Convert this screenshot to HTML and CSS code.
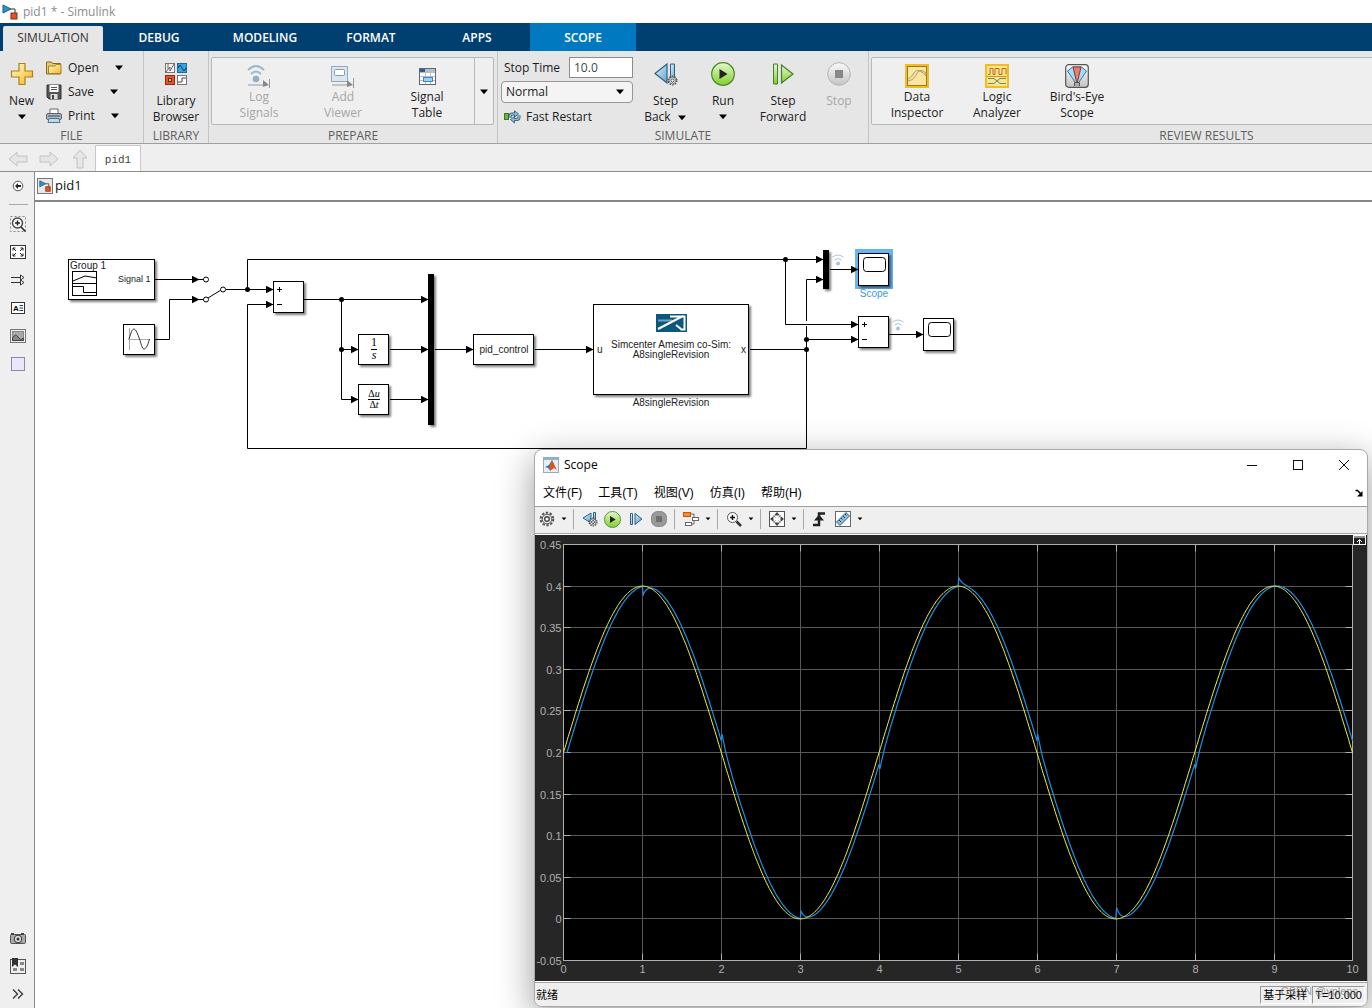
FILE: index.html
```html
<!DOCTYPE html>
<html lang="en">
<head>
<meta charset="utf-8">
<title>pid1 * - Simulink</title>
<link rel="stylesheet" href="styles.css">
</head>
<body>
<svg class="defs" aria-hidden="true">
  <defs>
    <linearGradient id="gold" x1="0" y1="0" x2="1" y2="1"><stop offset="0" stop-color="#fffbd0"/><stop offset="1" stop-color="#f3b51a"/></linearGradient>
    <linearGradient id="blue" x1="0" y1="0" x2="1" y2="1"><stop offset="0" stop-color="#e4f3fc"/><stop offset="1" stop-color="#5fa3cf"/></linearGradient>
    <linearGradient id="green" x1="0" y1="0" x2="0" y2="1"><stop offset="0" stop-color="#e4f8ce"/><stop offset="1" stop-color="#7fd02c"/></linearGradient>
    <linearGradient id="grey" x1="0" y1="0" x2="0" y2="1"><stop offset="0" stop-color="#fafafa"/><stop offset="1" stop-color="#c4c4c4"/></linearGradient>
    <symbol id="caret" viewBox="0 0 10 6"><path d="M1 0.5H9L5 5.2z" fill="#000"/></symbol>
    <symbol id="model" viewBox="0 0 16 16"><path d="M1 1l8 4-8 4z" fill="#2a93cf" stroke="#1b5d87"/><path d="M9 5h4v4" fill="none" stroke="#333"/><rect x="9" y="9" width="6" height="6" fill="#dd5526" stroke="#8d2b0d"/></symbol>
    <symbol id="gear" viewBox="0 0 16 16"><circle cx="8" cy="8" r="6.3" fill="none" stroke="#555" stroke-width="2" stroke-dasharray="2.4 1.55"/><circle cx="8" cy="8" r="4.8" fill="#eee" stroke="#555"/><circle cx="8" cy="8" r="2.3" fill="#fff" stroke="#444" stroke-width="1.4"/></symbol>
    <symbol id="run" viewBox="0 0 24 24"><circle cx="12" cy="12" r="11.300" fill="url(#green)" stroke="#4d8521" stroke-width="1.2"/><path d="M8.500 7l8 5-8 5z" fill="#222"/></symbol>
    <symbol id="back" viewBox="0 0 24 24"><path d="M13 2v19L1 11.5z" fill="url(#blue)" stroke="#2f6185" stroke-width="1.2"/><path d="M16.500 2h4v18h-4z" fill="url(#blue)" stroke="#2f6185"/><use href="#gear" x="13" y="13" width="11" height="11"/></symbol>
    <symbol id="wifi" viewBox="0 0 12 12"><g fill="none" stroke="#a9c3d8"><path d="M0.500 3Q6-1 11.500 3M2.500 6Q6 3 9.500 6"/></g><circle cx="6" cy="9.500" r="2" fill="#a9c3d8"/></symbol>
    <symbol id="arrow" viewBox="0 0 20 16"><path d="M1 8l8-7v4h10v6H9v4z" fill="#e6e6e6" stroke="#c2c2c2"/></symbol>
    <filter id="drop" x="-20%" y="-20%" width="150%" height="150%"><feDropShadow dx="2" dy="2" stdDeviation="1.300" flood-opacity="0.5"/></filter>
  </defs>
</svg>

<header class="titlebar">
  <svg width="16" height="16"><use href="#model"/></svg>
  <h1 class="titlebar-text">pid1 * - Simulink</h1>
</header>

<nav class="tabs">
  <button class="tab tab-active">SIMULATION</button>
  <button class="tab">DEBUG</button>
  <button class="tab">MODELING</button>
  <button class="tab">FORMAT</button>
  <button class="tab">APPS</button>
  <button class="tab tab-context">SCOPE</button>
</nav>

<div class="ribbon">
  <section class="group group-file">
    <div class="group-body">
      <button class="tool tool-new">
        <svg class="tool-icon" viewBox="0 0 24 24"><path d="M9 1.500h6V9h7.500v6H15v7.500H9V15H1.500V9H9z" fill="url(#gold)" stroke="#a9821c" stroke-width="1.200"/></svg>
        <span>New</span>
        <svg class="caret tool-caret"><use href="#caret"/></svg>
      </button>
      <div class="file-list">
        <button class="row-tool"><svg width="16" height="16" viewBox="0 0 16 16"><path d="M0.500 2h5l1 1.500h8V14h-14z" fill="#e8cb72" stroke="#876817"/><path d="M2.500 13.500V6H9l1-1.500h5v9z" fill="url(#gold)" stroke="#a5822a"/></svg>Open<svg class="caret"><use href="#caret"/></svg></button>
        <button class="row-tool"><svg width="16" height="16" viewBox="0 0 16 16"><path d="M1 1h14v14H3l-2-2z" fill="#555" stroke="#333"/><path d="M3.500 1h9v7h-9z" fill="#fff"/><path d="M5 3.500h6M5 5.500h6" stroke="#555"/><path d="M4.500 10h7v5h-7z" fill="#ddd"/><path d="M6 11h2v4H6z" fill="#444"/></svg>Save<svg class="caret"><use href="#caret"/></svg></button>
        <button class="row-tool"><svg width="16" height="16" viewBox="0 0 16 16"><path d="M4 1h8v6H4z" fill="#fff" stroke="#666"/><rect x="0.500" y="5.500" width="15" height="6" rx="1.500" fill="#aebac6" stroke="#58626c"/><path d="M2 8h12" stroke="#445"/><path d="M3 10.500h10l1 4H2z" fill="#b9dcf5" stroke="#54728a"/></svg>Print<svg class="caret"><use href="#caret"/></svg></button>
      </div>
    </div>
    <h2 class="group-name">FILE</h2>
  </section>

  <section class="group group-library">
    <div class="group-body">
      <button class="tool tool-library">
        <svg class="tool-icon" viewBox="0 0 24 24"><rect x="1.500" y="1.500" width="9" height="9" fill="#f4f4f4" stroke="#777"/><path d="M2 10l4-5v4l4-7M4 2v5" fill="none" stroke="#666"/><rect x="13.500" y="1.500" width="9" height="9" fill="#35a3dc" stroke="#1b6c9b"/><path d="M14 6q2-5 4 0t4 0" fill="none" stroke="#083c5c"/><rect x="1.500" y="13.500" width="9" height="9" fill="#e2572a" stroke="#902d0d"/><rect x="4.500" y="16.500" width="3" height="3" fill="#f7b193" stroke="#732206"/><rect x="13.500" y="13.500" width="9" height="9" fill="#fff" stroke="#777"/><path d="M14 20h4v-4h4" fill="none" stroke="#444"/></svg>
        <span>Library<br>Browser</span>
      </button>
    </div>
    <h2 class="group-name">LIBRARY</h2>
  </section>

  <section class="group group-prepare">
    <div class="gallery">
      <button class="tool tool-prepare" disabled>
        <svg class="tool-icon" viewBox="0 0 24 24"><g fill="none" stroke="#9db6c9" stroke-width="1.800"><path d="M1 6q8-8 16 0M4 10q5-5 10 0"/></g><circle cx="9" cy="15" r="3.300" fill="#8fb0c9"/><path d="M1 21h16M22.500 15v9" stroke="#999"/><path d="M16 16l6 5-6 2z" fill="#888"/></svg>
        <span>Log<br>Signals</span>
      </button>
      <button class="tool tool-prepare" disabled>
        <svg class="tool-icon" viewBox="0 0 24 24"><rect x="0.500" y="2.500" width="16" height="15" fill="#dbe7f0" stroke="#91a9bb"/><rect x="3.500" y="5.500" width="10" height="6" rx="1" fill="#fff" stroke="#7f9db5"/><path d="M1 21h16M22.500 14v10" stroke="#999"/><path d="M16 16l6 5-6 2z" fill="#888"/></svg>
        <span>Add<br>Viewer</span>
      </button>
      <button class="tool tool-prepare">
        <svg class="tool-icon" viewBox="0 0 24 24"><rect x="4.500" y="4.500" width="16" height="16" fill="#fff" stroke="#666"/><path d="M5 5h15v3H5z" fill="#a9c2d6"/><path d="M5 5h5v3H5z" fill="#2f5f8a"/><path d="M5 8.500h15M5 12.500h15M5 16.500h15M10.500 8v12M15.500 8v12" stroke="#bbb"/><rect x="8.500" y="13.500" width="9" height="4" fill="#9bd3ff" stroke="#3a87c8"/></svg>
        <span>Signal<br>Table</span>
      </button>
      <button class="gallery-more" aria-label="More"><svg class="caret"><use href="#caret"/></svg></button>
    </div>
    <h2 class="group-name">PREPARE</h2>
  </section>

  <section class="group group-simulate">
    <div class="group-body">
      <div class="sim-form">
        <div class="sim-time"><label for="stop-time">Stop Time</label><input id="stop-time" class="time-input" type="text" value="10.0"></div>
        <div class="mode">
          <select class="mode-select" aria-label="Simulation mode"><option>Normal</option></select>
          <svg class="caret mode-caret"><use href="#caret"/></svg>
        </div>
        <button class="row-tool row-restart"><svg width="17" height="14" viewBox="0 0 17 14"><rect x="0.500" y="3.500" width="4" height="6" fill="#6fb33c" stroke="#3f7420"/><g fill="none" stroke="#27506f" stroke-width="3"><path d="M6 8V6.500q0-2.500 2.500-2.500H11M15 5.500V7q0 2.500-2.500 2.500H10"/></g><g fill="#8dbbdc" stroke="#27506f" stroke-width="0.800"><path d="M10.500 0.800L14.500 4l-4 3zM10.500 6.500l-4 3 4 3.500z"/></g><path d="M6 8V6.500Q6 4 8.500 4H11M15 5.500V7q0 2.500-2.500 2.500H10" fill="none" stroke="#8dbbdc" stroke-width="1.500"/></svg>Fast Restart</button>
      </div>
      <button class="tool tool-back">
        <svg class="tool-icon" viewBox="0 0 24 24"><use href="#back"/></svg>
        <span>Step<br>Back&nbsp; <svg class="caret"><use href="#caret"/></svg></span>
      </button>
      <button class="tool tool-run">
        <svg class="tool-icon" viewBox="0 0 24 24"><use href="#run"/></svg>
        <span>Run</span>
        <svg class="caret tool-caret"><use href="#caret"/></svg>
      </button>
      <button class="tool tool-forward">
        <svg class="tool-icon" viewBox="0 0 24 24"><path d="M2.500 2h4v20h-4z" fill="url(#green)" stroke="#467f29"/><path d="M10.500 3v18L22 12z" fill="url(#green)" stroke="#467f29" stroke-width="1.200"/></svg>
        <span>Step<br>Forward</span>
      </button>
      <button class="tool tool-stop" disabled>
        <svg class="tool-icon" viewBox="0 0 24 24"><circle cx="12" cy="12" r="11.300" fill="url(#grey)" stroke="#b5b5b5"/><path d="M8 8h8v8H8z" fill="#888"/></svg>
        <span>Stop</span>
      </button>
    </div>
    <h2 class="group-name">SIMULATE</h2>
  </section>

  <section class="group group-review">
    <div class="gallery">
      <button class="tool tool-review">
        <svg class="tool-icon" viewBox="0 0 24 24"><rect x="1" y="1" width="22" height="22" fill="#fae6a0" stroke="#f0bd22" stroke-width="2"/><rect x="2.500" y="2.500" width="19" height="19" fill="none" stroke="#9b7a1e"/><path d="M3 15q4-2 6-6t6-2 6 5" fill="none" stroke="#87a58b"/><path d="M3 17q5 0 8-6t7-4 3 4" fill="none" stroke="#d58b52"/></svg>
        <span>Data<br>Inspector</span>
      </button>
      <button class="tool tool-review">
        <svg class="tool-icon" viewBox="0 0 24 24"><rect x="1" y="1" width="22" height="22" fill="#fae58c" stroke="#f0bd22" stroke-width="2"/><path d="M2 12.500h20" stroke="#c29a2a"/><path d="M3 10.500h2v-6h3v6h2v-6h4v6h3v-6h4v6" fill="none" stroke="#c4622a"/><path d="M3 14.500h6l6 5h6M3 19.500h6l6-5h6" fill="none" stroke="#6f8a68"/></svg>
        <span>Logic<br>Analyzer</span>
      </button>
      <button class="tool tool-review">
        <svg class="tool-icon" viewBox="0 0 24 24"><rect x="0.700" y="0.700" width="22.600" height="22.600" rx="3" fill="url(#grey)" stroke="#555" stroke-width="1.200"/><path d="M12 21L2.500 7l5-4h9l5 4z" fill="#a5dcf5" stroke="#317ba5"/><path d="M12 20L8 3h8z" fill="#d9847a" stroke="#a32d25"/><path d="M9.500 22v-3.500h5V22" fill="#aaa" stroke="#555"/></svg>
        <span>Bird's-Eye<br>Scope</span>
      </button>
    </div>
    <h2 class="group-name">REVIEW RESULTS</h2>
  </section>
</div>

<div class="doc-tabs">
  <button class="nav-arrow" aria-label="Back"><svg width="20" height="16"><use href="#arrow"/></svg></button>
  <button class="nav-arrow" aria-label="Forward"><svg class="arrow-forward" width="20" height="16"><use href="#arrow"/></svg></button>
  <button class="nav-arrow" aria-label="Up"><svg class="arrow-up" width="20" height="16"><use href="#arrow"/></svg></button>
  <button class="doc-tab">pid1</button>
</div>

<div class="workspace">
  <aside class="palette">
    <button class="palette-button" aria-label="Hide browser"><svg width="16" height="16" viewBox="0 0 16 16"><circle cx="8" cy="8" r="4.800" fill="#fff" stroke="#555"/><path d="M5 8l3-3v2h3v2H8v2z" fill="#222"/></svg></button>
    <hr class="palette-rule">
    <button class="palette-button" aria-label="Zoom"><svg width="16" height="16" viewBox="0 0 16 16"><rect x="0.500" y="0.500" width="15" height="15" fill="none" stroke="#888" stroke-dasharray="2 2"/><circle cx="7.500" cy="7" r="5" fill="#fff" stroke="#444" stroke-width="1.400"/><path d="M5 7h5M7.500 4.500v5M11 11l4.500 4.500" stroke="#222" stroke-width="1.500"/></svg></button>
    <button class="palette-button" aria-label="Fit to view"><svg width="16" height="16" viewBox="0 0 16 16"><rect x="0.500" y="1.500" width="15" height="13" fill="#fff" stroke="#333"/><path d="M3 6.500V4h2.500M3 4l3 3M13 6.500V4h-2.500M13 4l-3 3M3 9.500V12h2.500M3 12l3-3M13 9.500V12h-2.500M13 12l-3-3" fill="none" stroke="#222"/></svg></button>
    <button class="palette-button" aria-label="Sample time"><svg width="16" height="16" viewBox="0 0 16 16"><path d="M1 5.500h11M1 10.500h11" stroke="#333"/><path d="M10.500 3l3.500 2.500L10.500 8zM10.500 8l3.500 2.500-3.500 2.500z" fill="#fff" stroke="#333"/></svg></button>
    <button class="palette-button" aria-label="Annotation"><svg width="16" height="16" viewBox="0 0 16 16"><rect x="1.500" y="2.500" width="13" height="11" fill="#fff" stroke="#333"/><text x="3" y="11" class="glyph-text">A</text><path d="M9.500 5.500H13M9.500 8H13M9.500 10.500H13" stroke="#333"/></svg></button>
    <button class="palette-button" aria-label="Image"><svg width="16" height="16" viewBox="0 0 16 16"><rect x="0.500" y="1.500" width="15" height="13" fill="#eee" stroke="#777"/><rect x="2.500" y="3.500" width="11" height="9" fill="#aaa" stroke="#888"/><path d="M2.500 10q3-5 5.500-1t5.500 1v2.500h-11z" fill="#888" stroke="#444"/></svg></button>
    <button class="palette-button" aria-label="Area"><svg width="16" height="16" viewBox="0 0 16 16"><rect x="1.500" y="1.500" width="13" height="13" fill="#e9e8fb" stroke="#8a8aa5"/></svg></button>
    <div class="palette-space"></div>
    <button class="palette-button" aria-label="Screenshot"><svg width="16" height="16" viewBox="0 0 16 16"><rect x="0.500" y="4.500" width="15" height="9" rx="1" fill="#aaa" stroke="#555"/><path d="M1 4h3M11 4h3" stroke="#444" stroke-width="2"/><circle cx="8" cy="9" r="3.800" fill="#ddd" stroke="#333"/><circle cx="8" cy="9" r="1.500" fill="#333"/></svg></button>
    <button class="palette-button" aria-label="Library"><svg width="16" height="16" viewBox="0 0 16 16"><rect x="0.500" y="1.500" width="15" height="14" fill="#eee" stroke="#555"/><path d="M2 0h6v9L5 6.500 2 9z" fill="#333"/><path d="M10 4h4v3h-4zM3 10h4v3H3zM10 10h4v3h-4z" fill="#888"/></svg></button>
    <button class="palette-button" aria-label="More"><svg width="16" height="16" viewBox="0 0 16 16"><path d="M3 3.500L7.500 8 3 12.500M8 3.500L12.500 8 8 12.500" fill="none" stroke="#444" stroke-width="1.500"/></svg></button>
  </aside>

  <main class="editor">
    <div class="breadcrumb">
      <span class="breadcrumb-icon"><svg width="12" height="12"><use href="#model"/></svg></span>
      <a class="breadcrumb-link" href="#">pid1</a>
    </div>
    <div class="canvas">
      <svg class="diagram" width="940" height="260" viewBox="35 202 940 260" role="img" aria-label="pid1 block diagram">
        <defs>
          <marker id="tip" viewBox="0 0 8 8" refX="7.500" refY="4" markerWidth="8" markerHeight="8" markerUnits="userSpaceOnUse" orient="auto"><path d="M0 0L8 4 0 8z"/></marker>
        </defs>
        <g class="wire">
          <path marker-end="url(#tip)" d="M155 279.500H199"/>
          <path marker-end="url(#tip)" d="M155 339.500H169.500V299.500H199"/>
          <path d="M199 279.500h5M199 299.500h5M208 298l13-8M226 289.500h4"/>
          <path marker-end="url(#tip)" d="M230 289.500H273"/>
          <path marker-end="url(#tip)" d="M247.500 289.500V259.500H823"/>
          <path marker-end="url(#tip)" d="M806.500 349.500V448.500H247.500V304.500H273"/>
          <path marker-end="url(#tip)" d="M304 299.500H428"/>
          <path marker-end="url(#tip)" d="M341.500 299.500V349.500H358"/>
          <path marker-end="url(#tip)" d="M341.500 349.500V399.500H358"/>
          <path marker-end="url(#tip)" d="M390 349.500H428"/>
          <path marker-end="url(#tip)" d="M390 399.500H428"/>
          <path marker-end="url(#tip)" d="M435 349.500H473"/>
          <path marker-end="url(#tip)" d="M535 349.500H593"/>
          <path d="M750 349.500H806.500V326M806.500 321V300"/>
          <path marker-end="url(#tip)" d="M806.500 302V279.500H823"/>
          <path marker-end="url(#tip)" d="M785.500 259.500V324.500H858"/>
          <path marker-end="url(#tip)" d="M806.500 339.500H858"/>
          <path marker-end="url(#tip)" d="M889 334.500H923"/>
        </g>
        <g class="dots">
          <circle cx="247.500" cy="289.500" r="2.500"/><circle cx="341.500" cy="299.500" r="2.500"/><circle cx="341.500" cy="349.500" r="2.500"/><circle cx="785.500" cy="259.500" r="2.500"/><circle cx="806.500" cy="339.500" r="2.500"/><circle cx="806.500" cy="349.500" r="2.500"/>
        </g>
        <g class="ports"><circle cx="206" cy="279.500" r="2.500"/><circle cx="206" cy="299.500" r="2.500"/><circle cx="223" cy="289.500" r="2.500"/></g>
        <rect x="855" y="249" width="38" height="40" fill="#68b5ee"/>
        <g class="block">
          <rect x="68.500" y="259.500" width="86" height="40"/>
          <rect x="123.500" y="324.500" width="31" height="30"/>
          <rect x="273.500" y="281.500" width="30" height="31"/>
          <rect x="358.500" y="334.500" width="30" height="30"/>
          <rect x="358.500" y="384.500" width="30" height="30"/>
          <rect x="473.500" y="334.500" width="60" height="30"/>
          <rect x="593.500" y="304.500" width="155" height="90"/>
          <rect x="858.500" y="253.500" width="30" height="32"/>
          <rect x="858.500" y="316.500" width="30" height="31"/>
          <rect x="923.500" y="318.500" width="30" height="32"/>
        </g>
        <g class="mux"><rect x="428" y="274" width="6" height="151"/><rect x="823" y="250" width="6" height="39"/></g>
        <g class="wire">
          <path marker-end="url(#tip)" d="M830 269.500H858"/>
          <rect x="72.500" y="271.500" width="24" height="24"/><path d="M73 283.500h24M73 281l12-5 12 2M73 286.500h10.500v6H97"/>
          <rect x="863.500" y="257.500" width="22" height="14" rx="3"/><rect x="928.500" y="322.500" width="22" height="14" rx="3"/>
          <path d="M277 289.500h5M279.500 287v5M277 304.500h5M862 324.500h5M864.500 322v5M862 339.500h5"/>
          <path d="M371 349.500h6M368 399.500h12"/>
        </g>
        <path d="M129.500 328v22M128 339.500h22" stroke="#aaa"/>
        <path d="M129 339C131 333 132 329 134 329S138 335 139.500 339 142 349 144 349 148 345 149.500 339" fill="none" stroke="#333"/>
        <rect x="656" y="314" width="31" height="18" fill="#0b587b"/>
        <path d="M658 320.500h14" stroke="#6fa3b8" stroke-width="2"/>
        <path d="M658 329L683 316M670 316.500h14.500v13h-4M676 325l5 4" fill="none" stroke="#fff" stroke-width="2"/>
        <use href="#wifi" x="832" y="254" width="12" height="12"/>
        <use href="#wifi" x="892" y="319" width="12" height="12"/>
        <g class="label">
          <text x="70" y="269">Group 1</text>
          <text x="118" y="282" class="label-small">Signal 1</text>
          <text x="504" y="353" class="mid">pid_control</text>
          <text x="597" y="353">u</text>
          <text x="741" y="353">x</text>
          <text x="671" y="348" class="mid">Simcenter Amesim co-Sim:</text>
          <text x="671" y="358" class="mid">A8singleRevision</text>
          <text x="671" y="406" class="mid">A8singleRevision</text>
          <text x="874" y="297" class="mid label-selected">Scope</text>
        </g>
        <g class="math mid">
          <text x="374" y="346">1</text><text x="374" y="359" font-style="italic">s</text>
          <text x="374" y="397" class="math-small">Δ<tspan font-style="italic">u</tspan></text><text x="374" y="408" class="math-small">Δ<tspan font-style="italic">t</tspan></text>
        </g>
      </svg>
    </div>
  </main>
</div>

<section class="scope" aria-label="Scope window">
  <header class="scope-title">
    <svg width="16" height="16" viewBox="0 0 16 16"><rect x="0.500" y="0.500" width="15" height="15" fill="#e6eef5" stroke="#9aabb8"/><path d="M1 1h14v2H1z" fill="#8db3cd"/><path d="M2 10l4-2 3-5 2 5-4 5-2-2z" fill="#3875a8"/><path d="M9 3l5 10-3-2-4 3-1-3z" fill="#d9541e"/></svg>
    <h2 class="scope-name">Scope</h2>
    <button class="window-button" aria-label="Minimize"><svg width="12" height="12" viewBox="0 0 12 12"><path d="M1 6.500h10"/></svg></button>
    <button class="window-button" aria-label="Maximize"><svg width="12" height="12" viewBox="0 0 12 12"><rect x="1.500" y="1.500" width="9" height="9"/></svg></button>
    <button class="window-button" aria-label="Close"><svg width="12" height="12" viewBox="0 0 12 12"><path d="M1 1l10 10M11 1L1 11"/></svg></button>
  </header>
  <nav class="scope-menu" lang="zh">
    <button class="menu-item">文件(F)</button>
    <button class="menu-item">工具(T)</button>
    <button class="menu-item">视图(V)</button>
    <button class="menu-item">仿真(I)</button>
    <button class="menu-item">帮助(H)</button>
    <button class="menu-item menu-dock" aria-label="Dock"><svg width="8" height="8" viewBox="0 0 8 8"><path d="M0.500 1.500h2l3 3" fill="none" stroke="#000" stroke-width="1.600"/><path d="M7.500 2v5.500H2z"/></svg></button>
  </nav>
  <div class="scope-tools">
    <button class="scope-tool" aria-label="Settings"><svg width="16" height="16"><use href="#gear"/></svg></button>
    <button class="split" aria-label="Settings menu"><svg width="6" height="4"><use href="#caret"/></svg></button>
    <span class="divider"></span>
    <button class="scope-tool" aria-label="Step back"><svg width="16" height="16" viewBox="0 0 16 16"><path d="M9 2v10L1 7z" fill="url(#blue)" stroke="#2f6185"/><path d="M11.500 1.500h2v8h-2z" fill="url(#blue)" stroke="#2f6185"/><use href="#gear" x="6" y="6" width="10" height="10"/></svg></button>
    <button class="scope-tool" aria-label="Run"><svg width="17" height="17"><use href="#run"/></svg></button>
    <button class="scope-tool" aria-label="Step forward"><svg width="16" height="16" viewBox="0 0 16 16"><path d="M2.500 2.500h2v11h-2zM7 2.500v11L14 8z" fill="url(#blue)" stroke="#2f6185"/></svg></button>
    <button class="scope-tool" aria-label="Stop"><svg width="16" height="16" viewBox="0 0 16 16"><rect x="0.500" y="0.500" width="15" height="15" rx="6" fill="#999" stroke="#8a8a8a"/><path d="M5 5h6v6H5z" fill="#6e6e6e"/></svg></button>
    <span class="divider"></span>
    <button class="scope-tool" aria-label="Highlight block"><svg width="16" height="16" viewBox="0 0 16 16"><path d="M7 3h4v4M8 13h3V9" fill="none" stroke="#666"/><rect x="0.500" y="1.500" width="7" height="4" fill="#f68a35" stroke="#c25808"/><rect x="9.500" y="6.500" width="6" height="3" fill="#fff" stroke="#666"/><rect x="2.500" y="11.500" width="6" height="3" fill="#fff" stroke="#666"/></svg></button>
    <button class="split" aria-label="Highlight menu"><svg width="6" height="4"><use href="#caret"/></svg></button>
    <span class="divider"></span>
    <button class="scope-tool" aria-label="Zoom"><svg width="16" height="16" viewBox="0 0 16 16"><circle cx="6.500" cy="6.500" r="5" fill="#fff" stroke="#555"/><path d="M4 6.500h5M6.500 4v5" stroke="#111" stroke-width="1.500"/><path d="M10.500 10.500L15 15" stroke="#333" stroke-width="2.500"/></svg></button>
    <button class="split" aria-label="Zoom menu"><svg width="6" height="4"><use href="#caret"/></svg></button>
    <span class="divider"></span>
    <button class="scope-tool" aria-label="Scale axes"><svg width="16" height="16" viewBox="0 0 16 16"><rect x="0.500" y="0.500" width="15" height="15" fill="#fff" stroke="#555"/><path d="M8 1L11 4.500H5zM8 15l3-3.500H5zM1 8l3.500-3v6zM15 8l-3.500-3v6z" fill="#444"/><path d="M4.500 4.500l2 2M11.500 4.500l-2 2M4.500 11.500l2-2M11.500 11.500l-2-2" fill="none" stroke="#777"/></svg></button>
    <button class="split" aria-label="Scale menu"><svg width="6" height="4"><use href="#caret"/></svg></button>
    <span class="divider"></span>
    <button class="scope-tool" aria-label="Triggers"><svg width="16" height="16" viewBox="0 0 16 16"><path d="M1 14h6V2.500h6" fill="none" stroke="#222" stroke-width="2.500"/><path d="M7 3.500l5 6H2z" fill="#222"/></svg></button>
    <button class="scope-tool" aria-label="Measurements"><svg width="16" height="16" viewBox="0 0 16 16"><rect x="0.500" y="0.500" width="15" height="15" fill="#fff" stroke="#666"/><path d="M1.500 11L11 1.500 14.500 5 5 14.500z" fill="#8dbfe3" stroke="#33607f"/><path d="M4 9l2 2M6 7l1.500 1.500M8 5l2 2M10 3l1.500 1.500" stroke="#234"/></svg></button>
    <button class="split" aria-label="Measurements menu"><svg width="6" height="4"><use href="#caret"/></svg></button>
  </div>
  <div class="plot-area">
    <svg id="plot" class="plot" role="img" aria-label="Reference and response signals"></svg>
    <button class="plot-dock" aria-label="Maximize axes"><svg width="13" height="10" viewBox="0 0 13 10"><rect x="0.500" y="0.500" width="12" height="9" fill="#222" stroke="#fff"/><path d="M1 2h11M6.500 9V5M4 7L6.500 4.500 9 7" fill="none" stroke="#fff"/></svg></button>
  </div>
  <footer class="status" lang="zh">
    <span class="status-text">就绪</span>
    <span class="status-cell">基于采样</span>
    <span class="status-cell">T=10.000</span>
    <span class="watermark">CSDN @ypleps</span>
  </footer>
</section>
<script src="scope.js"></script>
</body>
</html>
```

FILE: styles.css
```css
* { box-sizing: border-box; }

body {
  margin: 0;
  min-height: 100vh;
  display: flex;
  flex-direction: column;
  position: relative;
  overflow: hidden;
  background: #fff;
  color: #1c1c1c;
  font: 12px/16px "Open Sans", "Noto Sans CJK SC", sans-serif;
}

button {
  margin: 0;
  padding: 0;
  border: 0;
  background: none;
  color: inherit;
  font: inherit;
}

h1, h2 { margin: 0; font: inherit; }
svg { flex: none; }
.defs { position: absolute; width: 0; height: 0; }
.caret { width: 10px; height: 6px; }

/* Title bar and toolstrip tabs */
.titlebar {
  height: 23px;
  display: flex;
  align-items: center;
  gap: 5px;
  padding-left: 2px;
}
.titlebar-text { color: #8c8c8c; }

.tabs {
  height: 28px;
  display: flex;
  background: #004070;
}
.tab {
  width: 106px;
  padding-top: 1px;
  color: #fff;
  font-weight: 600;
}
.tab-active {
  width: 100px;
  margin: 3px 3px 0;
  padding: 0 0 2px;
  border-radius: 2px 2px 0 0;
  background: #e6e6e6;
  color: #333;
  font-weight: 400;
}
.tab-context { background: #0079c1; }

/* Ribbon */
.ribbon {
  height: 93px;
  display: flex;
  overflow: hidden;
  background: #e6e6e6;
  border-bottom: 1px solid #a0a0a0;
}
.group {
  flex: none;
  display: flex;
  flex-direction: column;
  padding-top: 6px;
}
.group + .group {
  border-left: 1px solid #c4c4c4;
}
.group-body { height: 71px; display: flex; }
.group-file { width: 143px; }
.group-library { width: 65px; }
.group-prepare { width: 289px; }
.group-simulate { width: 371px; }
.group-review { flex: 1 0 676px; }
.group-name {
  margin-top: auto;
  color: #5e5e5e;
  line-height: 14px;
  text-align: center;
}

.gallery {
  height: 68px;
  margin: 0 3px 0 2px;
  padding-left: 5px;
  display: flex;
  background: #efefef;
  border: 1px solid #b8b8b8;
  border-radius: 2px;
}
.gallery-more {
  width: 19px;
  margin-left: auto;
  border-left: 1px solid #b8b8b8;
}

.tool {
  display: flex;
  flex-direction: column;
  align-items: center;
  padding-top: 5px;
  text-align: center;
}
.tool:disabled { color: #a6a6a6; }
.tool-icon { width: 24px; height: 24px; margin-bottom: 7px; }
.gallery .tool { padding-top: 6px; }
.gallery .tool-icon { margin-bottom: 1px; }
.tool-caret { margin-top: 5px; }
.tool-new { width: 43px; }
.tool-library { width: 64px; }
.tool-prepare { width: 84px; }
.tool-review { width: 80px; }
.tool-back { width: 59px; margin-left: 3px; }
.tool-run { width: 56px; }
.tool-forward { width: 64px; }
.tool-stop { width: 48px; }

.file-list {
  display: flex;
  flex-direction: column;
  gap: 2px;
  padding-left: 3px;
}
.row-tool {
  height: 22px;
  display: flex;
  align-items: center;
  gap: 6px;
}
.row-tool .caret { margin-left: 9px; }

.sim-form {
  width: 132px;
  margin-left: 3px;
  display: flex;
  flex-direction: column;
  gap: 3px;
}
.sim-time {
  display: flex;
  align-items: center;
  justify-content: space-between;
  padding-left: 3px;
}
.time-input {
  width: 64px;
  height: 21px;
  padding: 0 4px;
  border: 1px solid #8c8c8c;
  background: #fff;
  color: #444;
  font: inherit;
}
.mode { display: grid; align-items: center; }
.mode-select {
  grid-area: 1 / 1;
  height: 22px;
  padding: 0 4px;
  appearance: none;
  border: 1px solid #979797;
  border-radius: 4px;
  background: #f4f4f4;
  color: #222;
  font: inherit;
}
.mode-caret { grid-area: 1 / 1; justify-self: end; margin-right: 8px; pointer-events: none; }
.row-restart { padding-left: 3px; gap: 5px; }

/* Document tabs */
.doc-tabs {
  height: 28px;
  display: flex;
  align-items: center;
  padding: 2px 0 0 2px;
  background: #efefef;
  border-bottom: 1px solid #8d8d8d;
}
.nav-arrow { width: 31px; height: 24px; display: grid; place-items: center; }
.arrow-forward { transform: rotate(180deg); }
.arrow-up { transform: rotate(90deg); }
.doc-tab {
  width: 46px;
  height: 26px;
  align-self: flex-end;
  padding-top: 2px;
  border: 1px solid #c9c9c9;
  border-bottom: 0;
  background: #fff;
  color: #444;
  font-family: "Liberation Mono", monospace;
  font-size: 11px;
}

/* Workspace */
.workspace { flex: 1; display: flex; }
.palette {
  width: 35px;
  padding-left: 2px;
  display: flex;
  flex-direction: column;
  background: #efefef;
  border-right: 1px solid #8a8a8e;
}
.palette-button {
  height: 28px;
  display: grid;
  place-items: center;
}
.palette-rule {
  width: 19px;
  margin: 4px auto 5px;
  border: 0;
  border-top: 1px solid #aaa;
}
.palette-space { flex: 1; }
.glyph-text { font: bold 8px "Liberation Sans", sans-serif; }

.editor { flex: 1; min-width: 0; display: flex; flex-direction: column; }
.breadcrumb {
  height: 30px;
  display: flex;
  align-items: center;
  gap: 2px;
  padding-left: 2px;
  border-bottom: 2px solid #85858a;
}
.breadcrumb-icon {
  width: 16px;
  height: 16px;
  display: grid;
  place-items: center;
  border: 1px solid #777;
  background: #e8e8e8;
}
.breadcrumb-link { padding-bottom: 2px; color: #111; text-decoration: none; font-size: 13px; }
.canvas { flex: 1; overflow: hidden; }

.diagram { display: block; }
.wire { fill: none; stroke: #000; }
.ports { fill: #fff; stroke: #000; }
.block { fill: #fff; stroke: #000; filter: url(#drop); }
.mux { filter: url(#drop); }
.label { font: 10px "Liberation Sans", sans-serif; fill: #222; }
.label-small { font-size: 9px; }
.label-selected { fill: #3b96e0; }
.mid { text-anchor: middle; }
.math { font: 12px "Liberation Serif", serif; }
.math-small { font-size: 10px; }

/* Floating scope window */
.scope {
  position: absolute;
  top: 449px;
  left: 534px;
  right: 4px;
  bottom: 1px;
  display: flex;
  flex-direction: column;
  overflow: hidden;
  border: 1px solid #a9a9a9;
  border-radius: 8px;
  background: #fff;
  box-shadow: 0 10px 36px rgba(0, 0, 0, 0.4);
}
.scope-title {
  height: 30px;
  display: flex;
  align-items: center;
  padding-left: 8px;
}
.scope-name { flex: 1; padding-left: 5px; color: #000; }
.window-button {
  width: 46px;
  height: 30px;
  display: grid;
  place-items: center;
}
.window-button svg { fill: none; stroke: #111; }
.scope-menu {
  height: 27px;
  display: flex;
  align-items: center;
  gap: 16px;
  padding: 0 4px 0 8px;
  border-bottom: 1px solid #9d9d9d;
  color: #000;
  font-family: "Liberation Sans", "Noto Sans CJK SC", sans-serif;
}
.menu-dock { margin-left: auto; height: 12px; display: flex; align-items: center; }
.scope-tools {
  height: 27px;
  display: flex;
  align-items: center;
  padding-bottom: 2px;
  background: #efefef;
  border-bottom: 1px solid #a4a4a4;
}
.scope-tool { width: 23px; height: 24px; display: grid; place-items: center; }
.split { width: 11px; height: 24px; display: grid; place-items: center; }
.divider { width: 1px; height: 20px; margin: 0 4px; background: #a8a8a8; }

.plot-area {
  flex: 1;
  min-height: 0;
  margin-top: 1px;
  position: relative;
  background: #262626;
}
.plot { position: absolute; width: 100%; height: 100%; }
.plot-dock { position: absolute; top: 0; right: 1px; display: flex; }
.plot .back { fill: #000; }
.plot .grid { fill: none; stroke: #575757; }
.plot .axis { fill: none; stroke: #afafaf; }
.plot .reference { fill: none; stroke: #f6f640; }
.plot .response { fill: none; stroke: #1f8fe3; stroke-width: 1.2; }
.plot text { fill: #afafaf; font: 11px "Liberation Sans", sans-serif; }

.status {
  height: 25px;
  display: flex;
  align-items: center;
  gap: 2px;
  padding: 2px 2px 0 1px;
  position: relative;
  border-top: 1px solid #fff;
  background: #efefef;
  color: #000;
  font-size: 11px;
  font-family: "Liberation Sans", "Noto Sans CJK SC", sans-serif;
  box-shadow: inset 0 1px #a4a4a4;
}
.status-text { flex: 1; }
.status-cell {
  height: 18px;
  padding: 0 2px;
  border: 1px solid;
  border-color: #999 #fff #fff #999;
}
.watermark {
  position: absolute;
  right: 9px;
  top: 1px;
  color: rgba(90, 90, 90, 0.6);
}
```

FILE: scope.js
```js
const svg = document.getElementById('plot');

const reference = t => 0.2 + 0.2 * Math.sin(Math.PI * t / 2);

// Disturbances of the response: time and height of each kick.
const kicks = [[1, -0.010], [2, 0.011], [3, 0.009], [4, -0.009], [5, 0.010], [6, 0.011], [7, 0.013], [8, -0.009]];

function response(t) {
  let value = t < 0.045 ? 0.2 : reference(t - 0.045);
  for (const [start, height] of kicks) {
    const age = t - start;
    if (age > 0.005 && age < 0.4) value += height * Math.exp(-(age - 0.01) / 0.05);
  }
  return value;
}

function draw() {
  const { width, height } = svg.getBoundingClientRect();
  const left = 28.5, top = 9.5, right = Math.round(width) - 14.5, bottom = Math.round(height) - 20.5;
  const px = t => left + t / 10 * (right - left);
  const py = v => top + (0.45 - v) / 0.5 * (bottom - top);
  const curve = f => {
    const points = [];
    for (let i = 0; i <= 1000; i++) points.push(px(i / 100).toFixed(1) + ' ' + py(f(i / 100)).toFixed(1));
    return 'M' + points.join('L');
  };
  let grid = '', ticks = '', labels = '';
  for (let i = 0; i <= 10; i++) {
    const x = Math.round(px(i) - 0.1) + 0.5;
    const value = 0.45 - i * 0.05;
    const y = Math.floor(py(value)) + 0.5;
    grid += `M${x} ${top}V${bottom}M${left} ${y}H${right}`;
    ticks += `M${x} ${top}v7M${x} ${bottom}v-7M${left} ${y}h7M${right} ${y}h-7`;
    labels += `<text x="${x}" y="${bottom + 12}" text-anchor="middle">${i}</text>`;
    labels += `<text x="${left - 2}" y="${y + 4}" text-anchor="end">${Math.abs(value) < 0.001 ? 0 : +value.toFixed(2)}</text>`;
  }
  svg.innerHTML =
    `<rect class="back" x="${left}" y="${top}" width="${right - left}" height="${bottom - top}"/>` +
    `<path class="grid" d="${grid}"/>` +
    `<path class="axis" d="${ticks}M${left} ${top}H${right}V${bottom}H${left}z"/>` +
    `<path class="response" d="${curve(response)}"/>` +
    `<path class="reference" d="${curve(reference)}"/>` + labels;
}

draw();
window.addEventListener('resize', draw);
```
